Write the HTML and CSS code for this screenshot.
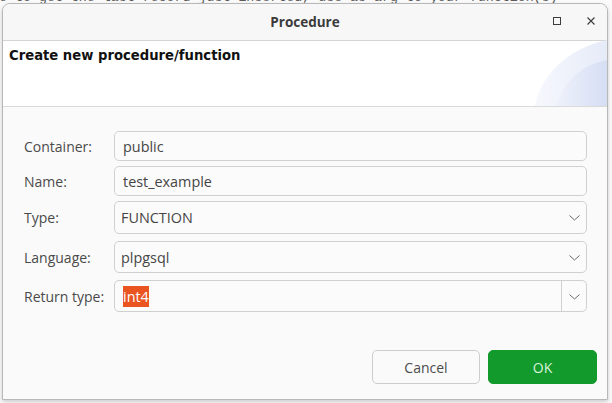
FILE: index.html
```html
<!DOCTYPE html>
<html>
<head>
<meta charset="utf-8">
<link rel="stylesheet" href="styles.css">
</head>
<body>
<div class="bgtext">e to get the last record just inserted, use as arg to your function(s)</div>
<div class="window">
  <div class="titlebar">
    <span class="title">Procedure</span>
    <div class="wbtns">
      <svg class="wicon" width="10" height="10" viewBox="0 0 10 10"><rect x="1.5" y="1.5" width="7" height="7" fill="none" stroke="#3c3c3c" stroke-width="1"/></svg>
      <svg class="wicon" width="10" height="10" viewBox="0 0 10 10"><path d="M1.5 1.5 L8.5 8.5 M8.5 1.5 L1.5 8.5" stroke="#3c3c3c" stroke-width="1.1" fill="none"/></svg>
    </div>
  </div>
  <div class="header">
    <div class="htitle">Create new procedure/function</div>
    <svg class="decor" width="72" height="66" viewBox="0 0 72 66">
      <defs>
        <linearGradient id="g1" x1="0" y1="0" x2="1" y2="0">
          <stop offset="0" stop-color="#f6f8fd"/>
          <stop offset="1" stop-color="#e6ebf8"/>
        </linearGradient>
        <linearGradient id="g2" x1="0" y1="0" x2="1" y2="0">
          <stop offset="0" stop-color="#eef1fa"/>
          <stop offset="1" stop-color="#d6def4"/>
        </linearGradient>
      </defs>
      <path d="M0 66 C4 38 32 8 72 0 L72 66 Z" fill="url(#g1)"/>
      <path d="M22 66 C27 42 48 24 72 20 L72 66 Z" fill="url(#g2)"/>
    </svg>
  </div>
  <div class="form">
    <div class="grid">
      <label class="lbl">Container:</label>
      <div class="field h30"><span class="val">public</span></div>
      <label class="lbl">Name:</label>
      <div class="field h30"><span class="val">test_example</span></div>
      <label class="lbl">Type:</label>
      <div class="field combo h33"><span class="val cv">FUNCTION</span><span class="chev"><svg width="11" height="6" viewBox="0 0 11 6"><path d="M0.5 0.5 L5.5 5 L10.5 0.5" fill="none" stroke="#6a6a6a" stroke-width="1"/></svg></span></div>
      <label class="lbl mt">Language:</label>
      <div class="field combo h32 mt"><span class="val cv">plpgsql</span><span class="chev"><svg width="11" height="6" viewBox="0 0 11 6"><path d="M0.5 0.5 L5.5 5 L10.5 0.5" fill="none" stroke="#6a6a6a" stroke-width="1"/></svg></span></div>
      <label class="lbl mt">Return type:</label>
      <div class="field combo h32 mt"><span class="val"><span class="sel">int4</span></span><span class="chev sep"><svg width="11" height="6" viewBox="0 0 11 6"><path d="M0.5 0.5 L5.5 5 L10.5 0.5" fill="none" stroke="#6a6a6a" stroke-width="1"/></svg></span></div>
    </div>
    <div class="buttons">
      <button class="btn cancel">Cancel</button>
      <button class="btn ok">OK</button>
    </div>
  </div>
</div>
</body>
</html>
```

FILE: styles.css
```css
html, body {
  margin: 0;
  padding: 0;
}
body {
  width: 612px;
  height: 403px;
  background: #fafafa;
  position: relative;
  overflow: hidden;
  font-family: "Open Sans", "DejaVu Sans", sans-serif;
}
.bgtext {
  position: absolute;
  top: -10px;
  left: -1px;
  font-family: "Liberation Mono", monospace;
  font-size: 13.3px;
  line-height: 15px;
  color: #5a5a5a;
  white-space: nowrap;
}
.window {
  position: relative;
  margin: 3px 4px 0 2px;
  height: 395px;
  border: 1px solid #b8b8b8;
  border-radius: 8px 8px 0 0;
  background: #fafafa;
  box-shadow: 0 2px 4px rgba(0,0,0,0.18);
  display: flex;
  flex-direction: column;
  overflow: hidden;
}
.titlebar {
  height: 36px;
  flex: none;
  background: #f7f7f7;
  border-bottom: 1px solid #d4d4d4;
  display: flex;
  align-items: center;
  justify-content: center;
  position: relative;
}
.title {
  font-weight: bold;
  font-size: 13.5px;
  color: #3b3b3b;
  margin-top: -1px;
}
.wbtns {
  position: absolute;
  right: 11px;
  top: 12px;
  display: flex;
  gap: 24px;
}
.wicon { display: block; }
.header {
  height: 66px;
  flex: none;
  background: #ffffff;
  border-bottom: 1px solid #dadada;
  position: relative;
  box-sizing: border-box;
  padding: 7px 6px;
}
.htitle {
  font-family: "DejaVu Sans", sans-serif;
  font-weight: bold;
  font-size: 13.2px;
  color: #111;
}
.decor {
  position: absolute;
  right: 0;
  bottom: 0;
  display: block;
}
.form {
  flex: 1;
  background: #fafafa;
  padding: 24px 20px 0 21px;
  display: flex;
  flex-direction: column;
}
.grid {
  display: grid;
  grid-template-columns: 90px 1fr;
  row-gap: 5px;
}
.lbl {
  display: flex;
  align-items: center;
  font-size: 14px;
  color: #4a4a4a;
}
.mt { margin-top: 2px; }
.field {
  box-sizing: border-box;
  border: 1px solid #d0d0d0;
  border-radius: 5px;
  background: #fbfbfb;
  display: flex;
  align-items: center;
  font-size: 14.4px;
  color: #454545;
}
.h30 { height: 30px; }
.h32 { height: 32px; }
.h33 { height: 33px; }
.val {
  flex: 1;
  padding-left: 8px;
}
.cv { padding-left: 6px; }
.sel {
  background: #e95420;
  color: #fff;
  padding: 1px 0;
}
.chev {
  width: 24px;
  height: 100%;
  display: flex;
  align-items: center;
  justify-content: center;
}
.chev svg { display: block; margin-top: 1px; }
.sep { border-left: 1px solid #d0d0d0; }
.buttons {
  display: flex;
  justify-content: flex-end;
  gap: 8px;
  margin-top: 38px;
  margin-right: -10px;
}
.btn {
  font-family: "Open Sans", "DejaVu Sans", sans-serif;
  font-size: 14px;
  height: 34px;
  border-radius: 5px;
  box-sizing: border-box;
}
.cancel {
  width: 108px;
  background: #fafafa;
  border: 1px solid #cdcdcd;
  color: #4d4d4d;
}
.ok {
  width: 109px;
  background: #139a2c;
  border: 1px solid #139a2c;
  color: #d9f2dc;
}
```
